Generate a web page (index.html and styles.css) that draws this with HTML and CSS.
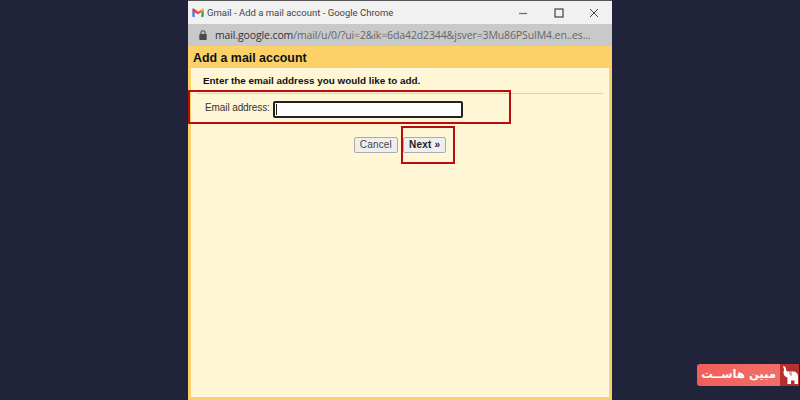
FILE: index.html
```html
<!DOCTYPE html>
<html lang="en">
<head>
<meta charset="utf-8">
<title>Add a mail account</title>
<link rel="stylesheet" href="styles.css">
</head>
<body>
<div class="window">
  <div class="titlebar">
    <svg class="gmail" width="12" height="9" viewBox="0 0 14 11"><path d="M0 2v8a1 1 0 0 0 1 1h2V4.500z" fill="#4285f4"/><path d="M14 2v8a1 1 0 0 1-1 1h-2V4.500z" fill="#34a853"/><path d="M0 2a1.400 1.400 0 0 1 2.300-1.200L7 4.400 3 6 .5 3.500z" fill="#ea4335"/><path d="M3 2l4 2.900L11 2v3L7 8 3 5z" fill="#ea4335"/><path d="M14 2a1.400 1.400 0 0 0-2.300-1.200L11 1.500V5l3-2.300z" fill="#fbbc04"/></svg>
    <span class="title">Gmail - Add a mail account - Google Chrome</span>
    <div class="controls">
      <svg width="10" height="10" viewBox="0 0 10 10"><path d="M1 5.500h8" stroke="#666" stroke-width="1.200"/></svg>
      <svg width="10" height="10" viewBox="0 0 10 10"><rect x="1" y="1" width="8" height="8" fill="none" stroke="#444" stroke-width="1.200"/></svg>
      <svg width="10" height="10" viewBox="0 0 10 10"><path d="M1 1l8 8M9 1l-8 8" stroke="#444" stroke-width="1"/></svg>
    </div>
  </div>
  <div class="urlbar">
    <svg width="8" height="10" viewBox="0 0 8 10"><path d="M1 4h6a.7.7 0 0 1 .7.7v4.600a.7.7 0 0 1-.7.7H1a.7.7 0 0 1-.7-.7V4.700A.7.7 0 0 1 1 4z" fill="#4a4a4a"/><path d="M2 4.500V2.700a2 2 0 0 1 4 0v1.800" fill="none" stroke="#4a4a4a" stroke-width="1.100"/></svg>
    <span class="url"><span class="host">mail.google.com</span>/mail/u/0/?ui=2&amp;ik=6da42d2344&amp;jsver=3Mu86PSuIM4.en..es...</span>
  </div>
  <div class="dialog">
    <h1 class="heading">Add a mail account</h1>
    <div class="panel">
      <p class="prompt">Enter the email address you would like to add.</p>
      <div class="field">
        <label class="label" for="email">Email address:</label>
        <input class="input" id="email" type="text">
      </div>
      <div class="actions">
        <button class="btn">Cancel</button>
        <button class="btn btn-next">Next »</button>
      </div>
    </div>
  </div>
  <div class="mark mark-field"></div>
  <div class="mark mark-next"></div>
</div>
<div class="brand">
  <span class="brand-name" lang="fa" dir="rtl">مبین هاســت</span>
  <span class="brand-icon">
    <svg width="16" height="18" viewBox="0 0 16 18"><path d="M1 0c1.500 0 3 1 3 3 0 1.500.5 2.500 2 2.500h5c3 0 5 2 5 5V18h-3.500v-3.500H9V18H5.500v-6.500C3 11 1.500 9 1.500 6.500 1.500 5 2 4 2.300 3.500 2 2.500 1.300 1.500 1 0z" fill="#fff"/><path d="M7 6h3v4L7.500 9z" fill="#e8a09c"/></svg>
  </span>
</div>
</body>
</html>
```
FILE: styles.css
```css
html, body {
  margin: 0;
  height: 400px;
  overflow: hidden;
}
body {
  background: #21233a;
  font-family: "Liberation Sans", Arial, sans-serif;
  display: flex;
  justify-content: center;
}
.window {
  position: relative;
  width: 424px;
  height: 400px;
  display: flex;
  flex-direction: column;
}
.titlebar {
  height: 23px;
  background: #f1f1f1;
  border-top: 1px solid #555;
  display: flex;
  align-items: center;
  padding-left: 4px;
  font-family: Roboto, sans-serif;
  font-size: 9.500px;
  color: #444;
}
.gmail { margin-right: 3px; }
.title { white-space: nowrap; }
.controls {
  margin-left: auto;
  display: flex;
  gap: 25.500px;
  margin-right: 13px;
}
.urlbar {
  height: 22px;
  background: #c9c9c9;
  display: flex;
  align-items: center;
  padding-left: 11px;
  gap: 8px;
  font-family: "Open Sans", sans-serif;
  font-size: 10.500px;
  letter-spacing: -0.12px;
  color: #666;
  white-space: nowrap;
}
.host { color: #333; }
.dialog {
  flex: 1;
  background: #fcd268;
  padding: 0 3px 3px;
  display: flex;
  flex-direction: column;
}
.heading {
  margin: 0;
  height: 22px;
  line-height: 24px;
  padding-left: 2px;
  font-size: 12.400px;
  font-weight: bold;
  color: #111;
}
.panel {
  flex: 1;
  background: #fff6d5;
  border: 1px solid #fffae8;
}
.prompt {
  margin: 0 5px;
  padding-left: 6px;
  height: 25px;
  line-height: 24px;
  font-size: 9.900px;
  font-weight: bold;
  color: #111;
  border-bottom: 1px solid #fcd268;
  box-sizing: border-box;
}
.field {
  display: flex;
  align-items: flex-start;
  padding: 7px 0 0 13px;
  gap: 3px;
}
.label {
  width: 65px;
  white-space: nowrap;
  font-size: 10px;
  letter-spacing: -0.1px;
  line-height: 13px;
  color: #333;
}
.input {
  width: 190px;
  height: 17px;
  box-sizing: border-box;
  border: 2px solid #222;
  border-radius: 2px;
  background: linear-gradient(#222, #222) 1px 1px / 1px 11px no-repeat, #fff;
  padding: 0;
  outline: none;
}
.actions {
  display: flex;
  justify-content: center;
  gap: 5px;
  padding-top: 19px;
}
.btn {
  height: 16px;
  padding: 0 5px 1px;
  box-sizing: border-box;
  border: 1px solid #aaa;
  border-radius: 2px;
  background: #efefef;
  font-family: "Liberation Sans", Arial, sans-serif;
  font-size: 10px;
  letter-spacing: 0.02em;
  color: #444;
}
.btn-next {
  font-weight: bold;
  color: #222;
}
.mark {
  position: absolute;
  border: 2px solid #b90c0c;
  box-sizing: border-box;
}
.mark-field {
  left: 0;
  top: 90px;
  width: 323px;
  height: 34px;
}
.mark-next {
  left: 213px;
  top: 126px;
  width: 54px;
  height: 38px;
}
.brand {
  position: absolute;
  left: 697px;
  top: 364px;
  width: 102px;
  height: 22px;
  display: flex;
  border-radius: 3px 0 0 3px;
  overflow: hidden;
  background: linear-gradient(90deg, #ef5f5a, #f4716b);
}
.brand-name {
  flex: 1;
  min-width: 0;
  text-align: center;
  color: #fff;
  font-family: "DejaVu Sans", sans-serif;
  font-weight: bold;
  font-size: 11.500px;
  line-height: 21px;
  white-space: nowrap;
}
.brand-icon {
  flex: none;
  width: 19px;
  background: #b5302f;
  display: flex;
  align-items: center;
  justify-content: center;
}
```
